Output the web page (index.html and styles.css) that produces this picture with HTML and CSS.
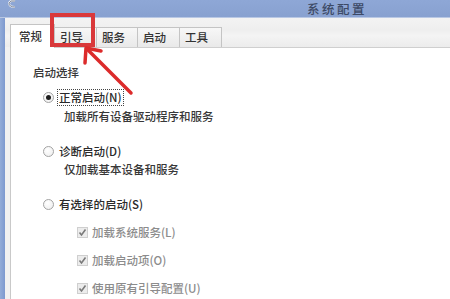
FILE: index.html
```html
<!DOCTYPE html>
<html lang="zh-CN">
<head>
<meta charset="utf-8">
<link rel="stylesheet" href="styles.css">
</head>
<body>
<div class="window">
  <div class="titlebar">
    <svg class="appicon" width="12" height="8" viewBox="0 0 12 8"><path d="M9 1 Q4 0 3 3 Q3 7 9 7" fill="none" stroke="#e8ecf4" stroke-width="2"/><path d="M9 1 Q4 0 3 3 Q3 7 9 7" fill="none" stroke="#6a7486" stroke-width="0.8"/></svg>
    <span class="title">系统配置</span>
  </div>
  <div class="frame">
    <div class="edge"></div>
    <div class="main">
      <div class="tabbar">
        <div class="tab selected">常规</div>
        <div class="tab w42">引导</div>
        <div class="tab w41">服务</div>
        <div class="tab w42">启动</div>
        <div class="tab w42">工具</div>
      </div>
      <div class="panel">
        <div class="heading">启动选择</div>
        <div class="row r1"><span class="radio on"></span><span class="focus">正常启动(N)</span></div>
        <div class="sub s1">加载所有设备驱动程序和服务</div>
        <div class="row r2"><span class="radio"></span><span class="lbl">诊断启动(D)</span></div>
        <div class="sub s2">仅加载基本设备和服务</div>
        <div class="row r2"><span class="radio"></span><span class="lbl">有选择的启动(S)</span></div>
        <div class="row chk c1"><span class="check"><svg width="11" height="11" viewBox="0 0 11 11"><path d="M2.5 5.5 L4.5 8 L8.5 2.5" fill="none" stroke="#7a7a7a" stroke-width="1.6"/></svg></span><span class="dis">加载系统服务(L)</span></div>
        <div class="row chk"><span class="check"><svg width="11" height="11" viewBox="0 0 11 11"><path d="M2.5 5.5 L4.5 8 L8.5 2.5" fill="none" stroke="#7a7a7a" stroke-width="1.6"/></svg></span><span class="dis">加载启动项(O)</span></div>
        <div class="row chk"><span class="check"><svg width="11" height="11" viewBox="0 0 11 11"><path d="M2.5 5.5 L4.5 8 L8.5 2.5" fill="none" stroke="#7a7a7a" stroke-width="1.6"/></svg></span><span class="dis">使用原有引导配置(U)</span></div>
      </div>
    </div>
  </div>
  <div class="redbox"></div>
  <svg class="arrow" width="150" height="100" viewBox="0 0 150 100">
    <path d="M131 93 L88 50" fill="none" stroke="#dc2b2b" stroke-width="3.5" stroke-linecap="round"/>
    <path d="M85 63 L86 48 L101 51" fill="none" stroke="#dc2b2b" stroke-width="3.5" stroke-linecap="round" stroke-linejoin="round"/>
  </svg>
</div>
</body>
</html>
```
FILE: styles.css
```css
html, body {
  margin: 0;
  padding: 0;
}
body {
  width: 450px;
  height: 299px;
  overflow: hidden;
  background: #ffffff;
  font-family: "Noto Sans CJK SC", "Noto Sans", sans-serif;
  color: #2a2a2a;
}
.window {
  position: relative;
  width: 450px;
  height: 299px;
  display: flex;
  flex-direction: column;
}
.titlebar {
  height: 18px;
  flex: none;
  display: flex;
  align-items: flex-start;
  background: linear-gradient(#8ea7d6, #88a1d0);
  border-bottom: 1px solid #b9c8e4;
  box-sizing: border-box;
}
.appicon {
  margin-left: 6px;
}
.title {
  margin-left: 289px;
  font-size: 12.5px;
  line-height: 17px;
  color: #3d4a66;
  letter-spacing: 2.5px;
  font-weight: 500;
}
.frame {
  flex: 1;
  display: flex;
}
.edge {
  width: 5px;
  flex: none;
  background: linear-gradient(90deg, #93acd8, #7d99cf);
}
.main {
  flex: 1;
  display: flex;
  flex-direction: column;
  background: #f1f1f1;
}
.tabbar {
  height: 29px;
  flex: none;
  display: flex;
  align-items: flex-end;
  padding-left: 5px;
  background: linear-gradient(#f3f3f3, #eeeeee 40%, #f4f4f4 60%, #ececec);
}
.tab {
  box-sizing: border-box;
  height: 20px;
  padding-left: 5px;
  font-size: 11.5px;
  line-height: 19px;
  color: #333;
  font-weight: 500;
  border: 1px solid #c4c4c4;
  border-left: none;
  border-bottom: none;
  background: linear-gradient(#f7f7f7, #e9e9e9);
}
.tab.selected {
  width: 45px;
  height: 24px;
  padding-left: 8px;
  line-height: 22px;
  margin-bottom: -1px;
  border-left: 1px solid #c4c4c4;
  background: #ffffff;
  position: relative;
  z-index: 1;
}
.w42 { width: 42px; }
.w41 { width: 41px; }
.panel {
  flex: 1;
  margin-left: 5px;
  background: #ffffff;
  border-left: 1px solid #c9c9c9;
  border-top: 1px solid #cfcfcf;
  padding: 16px 0 0 22px;
  font-size: 11.5px;
  line-height: 16px;
  font-weight: 500;
}
.heading {
  color: #383838;
}
.row {
  display: flex;
  align-items: center;
  height: 16px;
  margin-left: 10px;
}
.r1 { margin-top: 9px; }
.r2 { margin-top: 19px; }
.sub {
  margin-left: 31px;
  color: #383838;
}
.s1 { margin-top: 3px; }
.s2 { margin-top: 2px; }
.radio {
  box-sizing: border-box;
  width: 11px;
  height: 11px;
  border-radius: 50%;
  border: 1px solid #a3a3a3;
  background: radial-gradient(circle at 40% 35%, #ffffff, #ececec);
  margin-right: 4px;
  display: flex;
  align-items: center;
  justify-content: center;
}
.radio.on::after {
  content: "";
  width: 5px;
  height: 5px;
  border-radius: 50%;
  background: #1d1d1d;
}
.focus {
  outline: 1px dotted #444;
  outline-offset: 0;
  padding: 0 1px;
  line-height: 15px;
}
.lbl {
  padding-left: 1px;
}
.chk {
  margin-left: 44px;
  margin-top: 12px;
}
.check {
  box-sizing: border-box;
  width: 11px;
  height: 11px;
  border: 1px solid #cfcfcf;
  background: #ececec;
  margin-right: 4px;
  display: flex;
}
.check svg {
  margin: -1px;
}
.dis {
  color: #8c8c8c;
}
.redbox {
  position: absolute;
  left: 50px;
  top: 13px;
  width: 45px;
  height: 34px;
  box-sizing: border-box;
  border: 4px solid #d9383a;
  z-index: 3;
}
.arrow {
  position: absolute;
  left: 0;
  top: 0;
  z-index: 4;
}
```
